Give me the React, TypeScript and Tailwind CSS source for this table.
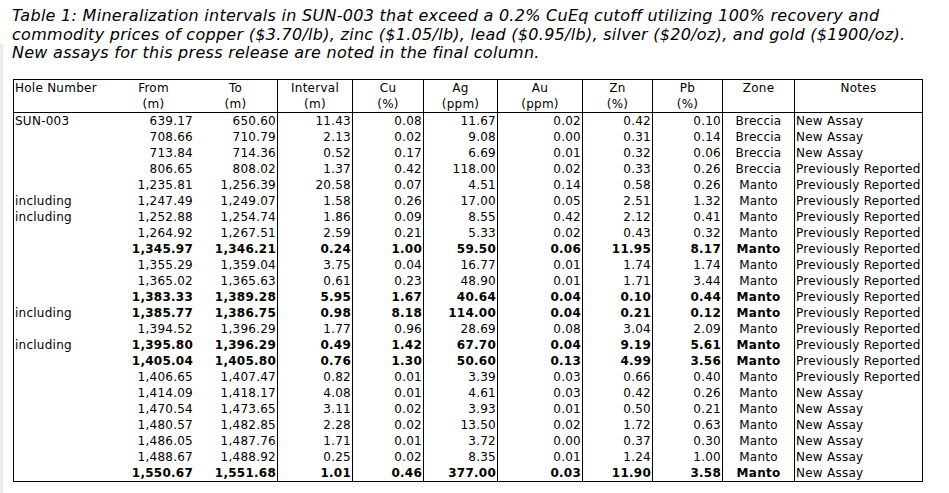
type Row = {
  hole: string;
  vals: string[];
  zone: string;
  note: string;
  bold?: boolean;
};

const PR = "Previously Reported";
const NA = "New Assay";

const rows: Row[] = [
  { hole: "SUN-003", vals: ["639.17", "650.60", "11.43", "0.08", "11.67", "0.02", "0.42", "0.10"], zone: "Breccia", note: NA },
  { hole: "", vals: ["708.66", "710.79", "2.13", "0.02", "9.08", "0.00", "0.31", "0.14"], zone: "Breccia", note: NA },
  { hole: "", vals: ["713.84", "714.36", "0.52", "0.17", "6.69", "0.01", "0.32", "0.06"], zone: "Breccia", note: NA },
  { hole: "", vals: ["806.65", "808.02", "1.37", "0.42", "118.00", "0.02", "0.33", "0.26"], zone: "Breccia", note: PR },
  { hole: "", vals: ["1,235.81", "1,256.39", "20.58", "0.07", "4.51", "0.14", "0.58", "0.26"], zone: "Manto", note: PR },
  { hole: "including", vals: ["1,247.49", "1,249.07", "1.58", "0.26", "17.00", "0.05", "2.51", "1.32"], zone: "Manto", note: PR },
  { hole: "including", vals: ["1,252.88", "1,254.74", "1.86", "0.09", "8.55", "0.42", "2.12", "0.41"], zone: "Manto", note: PR },
  { hole: "", vals: ["1,264.92", "1,267.51", "2.59", "0.21", "5.33", "0.02", "0.43", "0.32"], zone: "Manto", note: PR },
  { hole: "", vals: ["1,345.97", "1,346.21", "0.24", "1.00", "59.50", "0.06", "11.95", "8.17"], zone: "Manto", note: PR, bold: true },
  { hole: "", vals: ["1,355.29", "1,359.04", "3.75", "0.04", "16.77", "0.01", "1.74", "1.74"], zone: "Manto", note: PR },
  { hole: "", vals: ["1,365.02", "1,365.63", "0.61", "0.23", "48.90", "0.01", "1.71", "3.44"], zone: "Manto", note: PR },
  { hole: "", vals: ["1,383.33", "1,389.28", "5.95", "1.67", "40.64", "0.04", "0.10", "0.44"], zone: "Manto", note: PR, bold: true },
  { hole: "including", vals: ["1,385.77", "1,386.75", "0.98", "8.18", "114.00", "0.04", "0.21", "0.12"], zone: "Manto", note: PR, bold: true },
  { hole: "", vals: ["1,394.52", "1,396.29", "1.77", "0.96", "28.69", "0.08", "3.04", "2.09"], zone: "Manto", note: PR },
  { hole: "including", vals: ["1,395.80", "1,396.29", "0.49", "1.42", "67.70", "0.04", "9.19", "5.61"], zone: "Manto", note: PR, bold: true },
  { hole: "", vals: ["1,405.04", "1,405.80", "0.76", "1.30", "50.60", "0.13", "4.99", "3.56"], zone: "Manto", note: PR, bold: true },
  { hole: "", vals: ["1,406.65", "1,407.47", "0.82", "0.01", "3.39", "0.03", "0.66", "0.40"], zone: "Manto", note: PR },
  { hole: "", vals: ["1,414.09", "1,418.17", "4.08", "0.01", "4.61", "0.03", "0.42", "0.26"], zone: "Manto", note: NA },
  { hole: "", vals: ["1,470.54", "1,473.65", "3.11", "0.02", "3.93", "0.01", "0.50", "0.21"], zone: "Manto", note: NA },
  { hole: "", vals: ["1,480.57", "1,482.85", "2.28", "0.02", "13.50", "0.02", "1.72", "0.63"], zone: "Manto", note: NA },
  { hole: "", vals: ["1,486.05", "1,487.76", "1.71", "0.01", "3.72", "0.00", "0.37", "0.30"], zone: "Manto", note: NA },
  { hole: "", vals: ["1,488.67", "1,488.92", "0.25", "0.02", "8.35", "0.01", "1.24", "1.00"], zone: "Manto", note: NA },
  { hole: "", vals: ["1,550.67", "1,551.68", "1.01", "0.46", "377.00", "0.03", "11.90", "3.58"], zone: "Manto", note: NA, bold: true },
];

// From has no right rule; To..Pb do
const valCls = [
  "text-right",
  "text-right border-r border-black",
  "text-right border-r border-black",
  "text-right border-r border-black",
  "text-right border-r border-black",
  "text-right border-r border-black",
  "text-right border-r border-black",
  "text-right border-r border-black",
];

const th = "border-b border-black font-normal align-top px-px";

export default function App() {
  return (
    <div className="flex min-h-screen bg-white text-black tracking-[0.25px] font-['DejaVu_Sans',sans-serif]">
      <div className="w-[3px] mt-[44px] bg-[#ededed]" />
      <div className="pl-[9px] pt-[7px]">
        <p className="italic text-[16px] leading-[18.5px] tracking-[0.28px]">
          Table 1: Mineralization intervals in SUN-003 that exceed a 0.2% CuEq cutoff utilizing 100% recovery and
          <br />
          commodity prices of copper ($3.70/lb), zinc ($1.05/lb), lead ($0.95/lb), silver ($20/oz), and gold ($1900/oz).
          <br />
          New assays for this press release are noted in the final column.
        </p>

        <table className="mt-[16px] ml-[1px] table-fixed border-separate border-spacing-0 border border-black text-[12px] leading-[14px]">
          <colgroup>
            <col className="w-[99px]" />
            <col className="w-[81px]" />
            <col className="w-[84px]" />
            <col className="w-[75px]" />
            <col className="w-[71px]" />
            <col className="w-[74px]" />
            <col className="w-[85px]" />
            <col className="w-[70px]" />
            <col className="w-[70px]" />
            <col className="w-[72px]" />
            <col className="w-[127px]" />
          </colgroup>
          <thead className="leading-[16px]">
            <tr>
              <th className={`${th} text-left`}>Hole Number</th>
              <th className={`${th} text-center`}>From<br />(m)</th>
              <th className={`${th} text-center border-r`}>To<br />(m)</th>
              <th className={`${th} text-center border-r`}>Interval<br />(m)</th>
              <th className={`${th} text-center border-r`}>Cu<br />(%)</th>
              <th className={`${th} text-center border-r`}>Ag<br />(ppm)</th>
              <th className={`${th} text-center border-r`}>Au<br />(ppm)</th>
              <th className={`${th} text-center border-r`}>Zn<br />(%)</th>
              <th className={`${th} text-center border-r`}>Pb<br />(%)</th>
              <th className={`${th} text-center border-r`}>Zone</th>
              <th className={`${th} text-center`}>Notes</th>
            </tr>
          </thead>
          <tbody>
            {rows.map((r, i) => (
              <tr key={i}>
                <td className="px-px py-px whitespace-nowrap">{r.hole}</td>
                {r.vals.map((v, j) => (
                  <td key={j} className={`${valCls[j]} px-px py-px whitespace-nowrap ${r.bold ? "font-bold" : ""}`}>
                    {v}
                  </td>
                ))}
                <td className={`text-center border-r border-black px-px py-px ${r.bold ? "font-bold" : ""}`}>{r.zone}</td>
                <td className="px-px py-px whitespace-nowrap">{r.note}</td>
              </tr>
            ))}
          </tbody>
        </table>
      </div>
    </div>
  );
}
